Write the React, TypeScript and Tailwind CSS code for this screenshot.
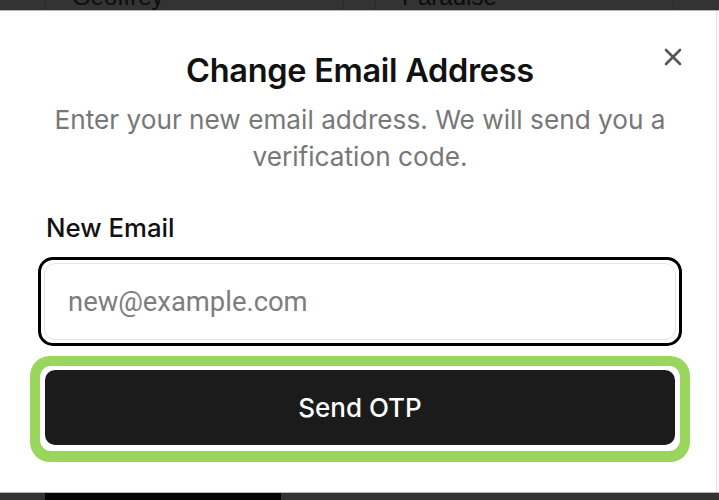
import { useState } from 'react';

const font = "font-['Inter','Noto_Sans',sans-serif]";

function CloseIcon() {
  return (
    <svg width="18" height="18" viewBox="0 0 18 18" fill="none" stroke="#555555" strokeWidth="2.6" strokeLinecap="round">
      <path d="M2 2 L16 16" />
      <path d="M16 2 L2 16" />
    </svg>
  );
}

export default function App() {
  const [email, setEmail] = useState('');

  return (
    <div className={`flex h-[500px] w-[719px] flex-col overflow-hidden bg-[#333333] ${font}`}>
      {/* page behind the overlay, cut off at the top */}
      <div className="flex h-[10px] shrink-0 items-end gap-[31px] overflow-hidden pl-[45px] pb-[1px]">
        {['Geoffrey', 'Paradise'].map((name) => (
          <div
            key={name}
            className="w-[299px] border-x border-[#2a2a2a] pl-[26px] font-['Liberation_Sans',Arial,sans-serif] text-[24px] leading-[24px] text-[#0b0b0b]"
          >
            {name}
          </div>
        ))}
      </div>

      <div className="flex shrink-0 border-y border-[#b5b5b5] bg-white">
        <div className="relative flex-1 pt-[42px] pb-[30px] pl-[30px] pr-[26px]">
          <button type="button" className="absolute top-[36px] right-[33px] p-[1px]">
            <CloseIcon />
          </button>

          <h2 className="text-center text-[32.5px] leading-[36px] font-semibold tracking-[-0.3px] text-[#111111]">
            Change Email Address
          </h2>
          <p className="mx-auto mt-[12px] w-[660px] text-center text-[26.2px] leading-[37px] text-[#777777]">
            Enter your new email address. We will send you a verification code.
          </p>

          <label className="mt-[38px] block pl-[16px] text-[25.8px] leading-[30px] font-medium text-[#111111]">
            New Email
          </label>

          <div className="mx-[8px] mt-[14px] rounded-[15px] border-[3px] border-black p-[3px]">
            <input
              type="email"
              value={email}
              onChange={(e) => setEmail(e.target.value)}
              placeholder="new@example.com"
              className="block h-[77px] w-full rounded-[11px] border border-[#e6e6e6] bg-white px-[23px] font-['Roboto',sans-serif] text-[27.4px] text-[#111] outline-none placeholder:text-[#7d7d7d]"
            />
          </div>

          <div className="mt-[10px] rounded-[20px] bg-[#9ad65c] px-[10px] pt-[10px] pb-[11px]">
            <div className="rounded-[11px] bg-white px-[5px] pt-[4px] pb-[6px]">
              <button
                type="button"
                className="block h-[75px] w-full rounded-[10px] bg-[#1b1b1b] text-center text-[26px] font-medium text-white"
              >
                Send OTP
              </button>
            </div>
          </div>
        </div>
        <div className="w-[4px] border-l border-[#e2e2e2] bg-[#fbfbfb]" />
      </div>

      <div className="flex h-[8px] shrink-0 pl-[45px]">
        <div className="w-[236px] bg-[#050505]" />
      </div>
    </div>
  );
}
